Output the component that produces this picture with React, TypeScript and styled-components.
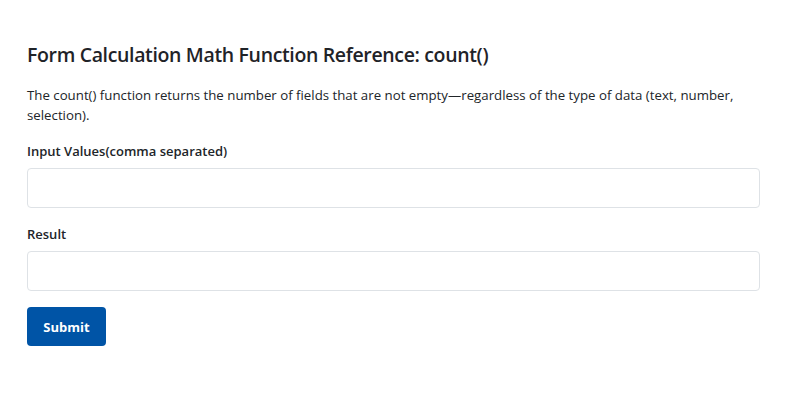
import React from "react";
import styled, { createGlobalStyle } from "styled-components";

const Global = createGlobalStyle`
  html, body { margin: 0; padding: 0; background: #ffffff; }
  body { font-family: "Open Sans", "Noto Sans", sans-serif; color: #212529; }
  * { box-sizing: border-box; }
`;

const Page = styled.div`
  padding: 40px 37px 0 27px;
`;

const Title = styled.h1`
  margin: 0 0 15px;
  font-size: 19.5px;
  line-height: 30px;
  font-weight: 600;
  letter-spacing: -0.35px;
  color: #1f2328;
`;

const Description = styled.p`
  margin: 0 0 16px;
  font-size: 13.25px;
  line-height: 20px;
  color: #212529;
`;

const Field = styled.div`
  display: flex;
  flex-direction: column;
  margin-bottom: 16px;
`;

const Label = styled.label`
  font-size: 13px;
  line-height: 20px;
  font-weight: 600;
  margin-bottom: 7px;
  color: #212529;
`;

const Input = styled.input`
  height: 40px;
  width: 100%;
  border: 1px solid #dee2e6;
  border-radius: 4px;
  padding: 6px 12px;
  font-size: 14px;
  font-family: inherit;
  background: #fff;
  outline: none;
`;

const Button = styled.button`
  width: 79px;
  height: 39px;
  border: none;
  border-radius: 4px;
  background: #0054a6;
  color: #ffffff;
  font-family: inherit;
  font-size: 13px;
  font-weight: 700;
  cursor: pointer;
`;

export default function App() {
  return (
    <>
      <Global />
      <Page>
        <Title>Form Calculation Math Function Reference: count()</Title>
        <Description>
          The count() function returns the number of fields that are not empty—regardless of the type of data (text, number,
          selection).
        </Description>
        <Field>
          <Label>Input Values(comma separated)</Label>
          <Input type="text" />
        </Field>
        <Field>
          <Label>Result</Label>
          <Input type="text" />
        </Field>
        <Button type="button">Submit</Button>
      </Page>
    </>
  );
}
